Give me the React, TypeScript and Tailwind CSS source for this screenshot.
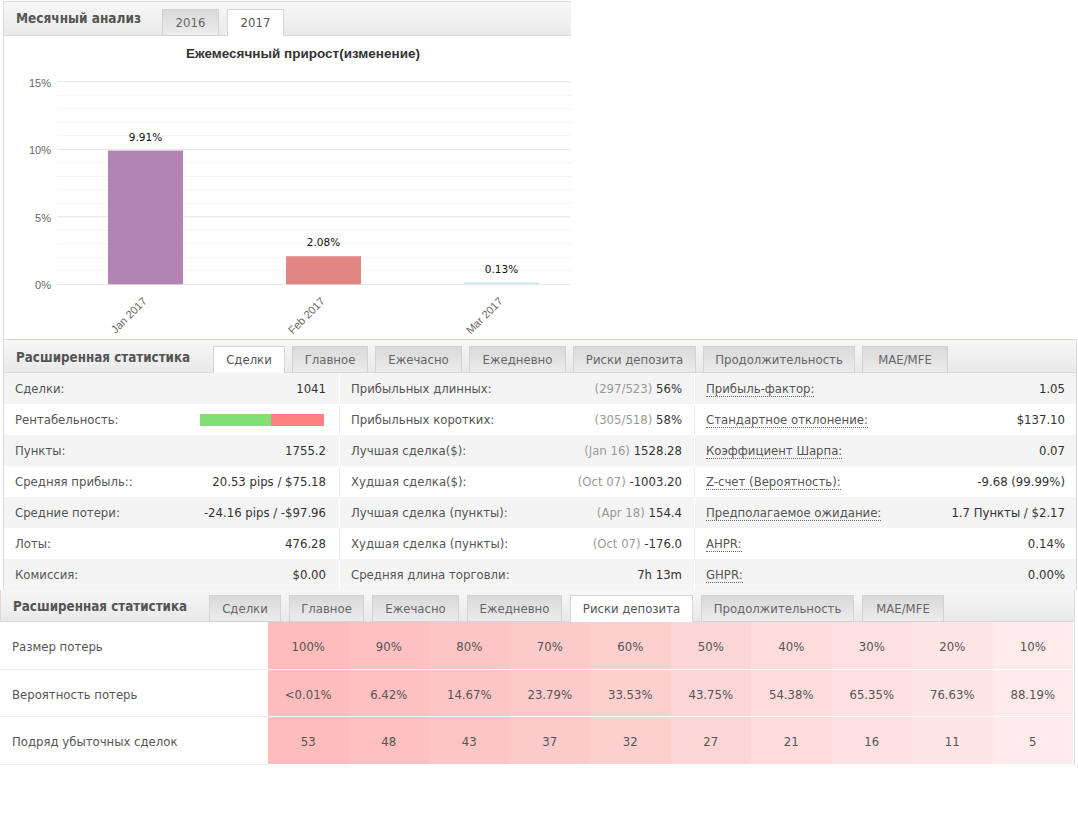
import React from "react";

const months = [
  { label: "Jan 2017", value: 9.91, x: 104, color: "#b384b3", text: "9.91%" },
  { label: "Feb 2017", value: 2.08, x: 282, color: "#e18783", text: "2.08%" },
  { label: "Mar 2017", value: 0.13, x: 460, color: "#cde6e8", text: "0.13%" },
];

const ZERO_Y = 248.3;
const PX_PER_PCT = 13.5;

function MonthlyChart() {
  const lines = Array.from({ length: 16 }, (_, i) => i);
  return (
    <svg width={567} height={303} className="block">
      <text
        x={299}
        y={22}
        textAnchor="middle"
        fontFamily="'Liberation Sans', Arial, sans-serif"
        fontWeight="bold"
        fontSize={13.5}
        fill="#333"
      >
        Ежемесячный прирост(изменение)
      </text>
      {lines.map((i) => {
        const y = ZERO_Y - i * PX_PER_PCT;
        const major = i % 5 === 0;
        return (
          <line
            key={i}
            x1={53}
            x2={567}
            y1={y}
            y2={y}
            stroke={major ? "#e3e3e3" : "#f3f3f3"}
            strokeWidth={1}
          />
        );
      })}
      {[0, 5, 10, 15].map((v) => (
        <text
          key={v}
          x={47}
          y={ZERO_Y - v * PX_PER_PCT + 5}
          textAnchor="end"
          fontFamily="'Liberation Sans', Arial, sans-serif"
          fontSize={11}
          fill="#666"
        >
          {v}%
        </text>
      ))}
      {months.map((m) => {
        const h = Math.max(m.value * PX_PER_PCT, 1.5);
        const cx = m.x + 37.5;
        return (
          <g key={m.label}>
            <rect x={m.x} y={ZERO_Y - h} width={75} height={h} fill={m.color} />
            <text
              x={cx}
              y={ZERO_Y - h - 10}
              textAnchor="middle"
              fontFamily="'DejaVu Sans', Verdana, sans-serif"
              fontSize={10.5}
              fill="#111"
            >
              {m.text}
            </text>
            <text
              x={cx + 2}
              y={266}
              textAnchor="end"
              transform={`rotate(-45 ${cx + 2} 266)`}
              fontFamily="'Liberation Sans', Arial, sans-serif"
              fontSize={11}
              fill="#666"
            >
              {m.label}
            </text>
          </g>
        );
      })}
    </svg>
  );
}

type TabSpec = { name: string; w: string };

function Tab({ name, w, active }: { name: string; w: string; active: boolean }) {
  return (
    <div
      className={
        active
          ? `${w} h-[27px] -mb-px flex items-center justify-center border border-b-0 border-[#d6d6d6] bg-white text-[#555]`
          : `${w} h-[27px] -mb-px flex items-center justify-center border border-[#d2d2d2] bg-gradient-to-b from-[#d9d9d9] to-[#ececec] text-[#666]`
      }
    >
      {name}
    </div>
  );
}

const statTabs2: TabSpec[] = [
  { name: "Сделки", w: "w-[72px]" },
  { name: "Главное", w: "w-[76px]" },
  { name: "Ежечасно", w: "w-[87px]" },
  { name: "Ежедневно", w: "w-[97px]" },
  { name: "Риски депозита", w: "w-[123px]" },
  { name: "Продолжительность", w: "w-[152px]" },
  { name: "MAE/MFE", w: "w-[86px]" },
];

const statTabs3: TabSpec[] = [
  { name: "Сделки", w: "w-[72px]" },
  { name: "Главное", w: "w-[75px]" },
  { name: "Ежечасно", w: "w-[87px]" },
  { name: "Ежедневно", w: "w-[95px]" },
  { name: "Риски депозита", w: "w-[123px]" },
  { name: "Продолжительность", w: "w-[153px]" },
  { name: "MAE/MFE", w: "w-[82px]" },
];

type Row = {
  a: [string, React.ReactNode];
  b: [string, string, string];
  c: [string, string];
};

const rows: Row[] = [
  { a: ["Сделки:", "1041"], b: ["Прибыльных длинных:", "(297/523)", "56%"], c: ["Прибыль-фактор:", "1.05"] },
  {
    a: [
      "Рентабельность:",
      <div className="flex w-[124px] h-[12px] mr-[2px]">
        <div className="w-[57%] bg-[#83e076]" />
        <div className="flex-1 bg-[#ff8080]" />
      </div>,
    ],
    b: ["Прибыльных коротких:", "(305/518)", "58%"],
    c: ["Стандартное отклонение:", "$137.10"],
  },
  { a: ["Пункты:", "1755.2"], b: ["Лучшая сделка($):", "(Jan 16)", "1528.28"], c: ["Коэффициент Шарпа:", "0.07"] },
  {
    a: ["Средняя прибыль::", "20.53 pips / $75.18"],
    b: ["Худшая сделка($):", "(Oct 07)", "-1003.20"],
    c: ["Z-счет (Вероятность):", "-9.68 (99.99%)"],
  },
  {
    a: ["Средние потери:", "-24.16 pips / -$97.96"],
    b: ["Лучшая сделка (пункты):", "(Apr 18)", "154.4"],
    c: ["Предполагаемое ожидание:", "1.7 Пункты / $2.17"],
  },
  { a: ["Лоты:", "476.28"], b: ["Худшая сделка (пункты):", "(Oct 07)", "-176.0"], c: ["AHPR:", "0.14%"] },
  { a: ["Комиссия:", "$0.00"], b: ["Средняя длина торговли:", "", "7h 13m"], c: ["GHPR:", "0.00%"] },
];

const riskLevels = ["100%", "90%", "80%", "70%", "60%", "50%", "40%", "30%", "20%", "10%"];
const riskProb = ["<0.01%", "6.42%", "14.67%", "23.79%", "33.53%", "43.75%", "54.38%", "65.35%", "76.63%", "88.19%"];
const riskSeries = ["53", "48", "43", "37", "32", "27", "21", "16", "11", "5"];
const riskShades = [
  "bg-[#ffbcbc]",
  "bg-[#fec0c0]",
  "bg-[#fdc5c5]",
  "bg-[#fbcaca]",
  "bg-[#fdd0d0]",
  "bg-[#fcd6d6]",
  "bg-[#fedcdc]",
  "bg-[#ffe0e0]",
  "bg-[#ffe5e5]",
  "bg-[#ffeaea]",
];

function RiskRow({ label, values }: { label: string; values: string[] }) {
  return (
    <div className="flex h-[47.5px]">
      <div className="w-[268px] pl-[12px] pt-[3px] flex items-center border-b border-[#ececec] text-[#555]">{label}</div>
      {values.map((v, i) => (
        <div
          key={i}
          className={`w-[80.5px] pt-[3px] flex items-center justify-center border-b border-white text-[#555] ${riskShades[i]}`}
        >
          {v}
        </div>
      ))}
    </div>
  );
}

export default function App() {
  return (
    <div className="w-[1078px] h-[821px] bg-white text-[13px] font-['DejaVu_Sans_Condensed','DejaVu_Sans',sans-serif] overflow-hidden">
      {/* Monthly analysis */}
      <div className="ml-[3px] mt-px w-[568px] border-t border-l border-[#dcdcdc]">
        <div className="h-[34px] flex items-end border-b border-[#d9d9d9] bg-gradient-to-b from-[#f7f7f7] to-[#eaeaea]">
          <div className="w-[158px] pl-[12px] self-center text-[13.5px] font-bold text-[#555]">Месячный анализ</div>
          <div className="flex gap-[8px]">
            <Tab name="2016" w="w-[57px]" active={false} />
            <Tab name="2017" w="w-[57px]" active={true} />
          </div>
        </div>
        <MonthlyChart />
      </div>

      {/* Extended statistics: trades */}
      <div className="ml-[3px] w-[1074px] border-t border-l border-r border-t-[#d3d8cc] border-x-[#dcdcdc]">
        <div className="h-[33px] flex items-end border-b border-[#d9d9d9] bg-gradient-to-b from-[#f7f7f7] to-[#e9e9e9]">
          <div className="w-[209px] pl-[12px] self-center mt-[3px] text-[13.3px] font-bold text-[#555]">Расширенная статистика</div>
          <div className="flex gap-[7px]">
            {statTabs2.map((t, i) => (
              <Tab key={t.name} name={t.name} w={t.w} active={i === 0} />
            ))}
          </div>
        </div>
        {rows.map((r, i) => {
          const odd = i % 2 === 0;
          const bg = odd ? "bg-[#f4f4f4]" : "bg-white";
          const sep = odd ? "border-white" : "border-[#ececec]";
          return (
            <div key={i} className={`flex h-[31px] pt-px ${bg}`}>
              <div className="w-[335px] pl-[11px] pr-[13px] flex items-center justify-between">
                <span className="text-[#555]">{r.a[0]}</span>
                <span className="text-[#333]">{r.a[1]}</span>
              </div>
              <div className={`w-[355px] pl-[11px] pr-[12px] flex items-center justify-between border-l ${sep}`}>
                <span className="text-[#555]">{r.b[0]}</span>
                <span className="text-[#333]">
                  {r.b[1] && <span className="text-[#999]">{r.b[1]} </span>}
                  {r.b[2]}
                </span>
              </div>
              <div className={`flex-1 pl-[11px] pr-[11px] flex items-center justify-between border-l ${sep}`}>
                <span className="text-[#555] border-b border-dotted border-[#666] leading-[15px]">{r.c[0]}</span>
                <span className="text-[#333]">{r.c[1]}</span>
              </div>
            </div>
          );
        })}
      </div>

      {/* Extended statistics: deposit risks */}
      <div className="w-[1075px] border-r border-[#dcdcdc]">
        <div className="h-[32px] flex items-end border-b border-l border-[#d9d9d9] bg-gradient-to-b from-[#f7f7f7] to-[#e9e9e9]">
          <div className="w-[208px] pl-[12px] self-center mt-[3px] text-[13.3px] font-bold text-[#555]">Расширенная статистика</div>
          <div className="flex gap-[8px]">
            {statTabs3.map((t, i) => (
              <Tab key={t.name} name={t.name} w={t.w} active={i === 4} />
            ))}
          </div>
        </div>
        <RiskRow label="Размер потерь" values={riskLevels} />
        <RiskRow label="Вероятность потерь" values={riskProb} />
        <RiskRow label="Подряд убыточных сделок" values={riskSeries} />
      </div>
    </div>
  );
}
